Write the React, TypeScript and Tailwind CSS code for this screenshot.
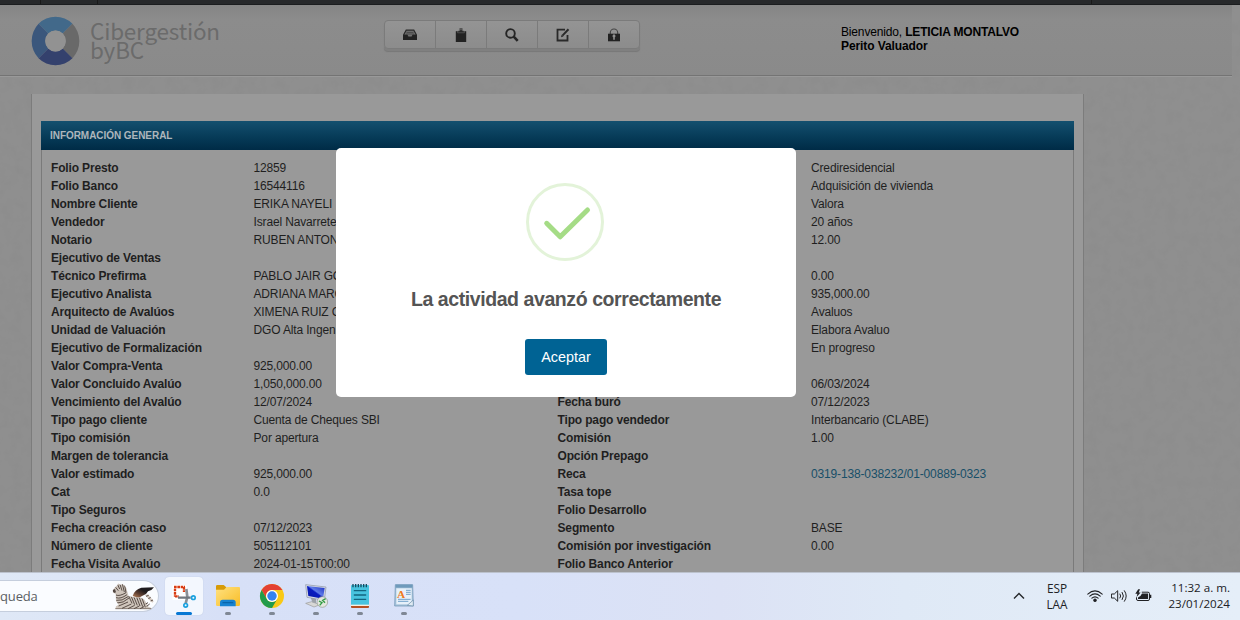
import type { ReactNode } from "react";

type Row = [string, string, string, string];

const rows: Row[] = [
  ["Folio Presto", "12859", "", "Crediresidencial"],
  ["Folio Banco", "16544116", "", "Adquisición de vivienda"],
  ["Nombre Cliente", "ERIKA NAYELI", "", "Valora"],
  ["Vendedor", "Israel Navarrete", "", "20 años"],
  ["Notario", "RUBEN ANTON", "", "12.00"],
  ["Ejecutivo de Ventas", "", "", ""],
  ["Técnico Prefirma", "PABLO JAIR GO", "", "0.00"],
  ["Ejecutivo Analista", "ADRIANA MARG", "", "935,000.00"],
  ["Arquitecto de Avalúos", "XIMENA RUIZ C", "", "Avaluos"],
  ["Unidad de Valuación", "DGO Alta Ingen", "", "Elabora Avaluo"],
  ["Ejecutivo de Formalización", "", "", "En progreso"],
  ["Valor Compra-Venta", "925,000.00", "", ""],
  ["Valor Concluido Avalúo", "1,050,000.00", "", "06/03/2024"],
  ["Vencimiento del Avalúo", "12/07/2024", "Fecha buró", "07/12/2023"],
  ["Tipo pago cliente", "Cuenta de Cheques SBI", "Tipo pago vendedor", "Interbancario (CLABE)"],
  ["Tipo comisión", "Por apertura", "Comisión", "1.00"],
  ["Margen de tolerancia", "", "Opción Prepago", ""],
  ["Valor estimado", "925,000.00", "Reca", "0319-138-038232/01-00889-0323"],
  ["Cat", "0.0", "Tasa tope", ""],
  ["Tipo Seguros", "", "Folio Desarrollo", ""],
  ["Fecha creación caso", "07/12/2023", "Segmento", "BASE"],
  ["Número de cliente", "505112101", "Comisión por investigación", "0.00"],
  ["Fecha Visita Avalúo", "2024-01-15T00:00", "Folio Banco Anterior", ""],
];

function Noise() {
  return (
    <svg className="absolute inset-0 h-full w-full" aria-hidden="true">
      <filter id="paper" x="0" y="0" width="100%" height="100%">
        <feTurbulence type="fractalNoise" baseFrequency="0.09" numOctaves={4} seed={4} />
        <feColorMatrix values="0 0 0 0 0.2  0 0 0 0 0.2  0 0 0 0 0.2  0.28 0 0 0 -0.11" />
      </filter>
      <rect width="100%" height="100%" filter="url(#paper)" />
    </svg>
  );
}

function Logo() {
  return (
    <div className="flex items-start">
      <svg className="h-[50px] w-[49px]" viewBox="-25 -25 50 50" preserveAspectRatio="none">
        <path d="M-17.3-17.3A24.8 24.8 0 0 1 17.3-17.3L7.4-7.4A10.5 10.5 0 0 0-7.4-7.4Z" fill="#42698a" />
        <path d="M17.3-17.3A24.8 24.8 0 0 1 17.3 17.3L7.4 7.4A10.5 10.5 0 0 0 7.4-7.4Z" fill="#696969" />
        <path d="M17.3 17.3A24.8 24.8 0 0 1-17.3 17.3L-7.4 7.4A10.5 10.5 0 0 0 7.4 7.4Z" fill="#34416d" />
        <path d="M-17.3 17.3A24.8 24.8 0 0 1-17.3-17.3L-7.4-7.4A10.5 10.5 0 0 0-7.4 7.4Z" fill="#3b577c" />
        <circle r="10.5" fill="#929292" />
      </svg>
      <div className="ml-[10px] mt-[5px] whitespace-nowrap font-['Noto_Sans_CJK_SC',sans-serif] text-[22.5px] leading-[19px] tracking-[-0.2px] text-[#6b6b6b]">
        Cibergestión
        <br />
        byBC
      </div>
    </div>
  );
}

const toolbarIcons: ReactNode[] = [
  <g key="inbox">
    <path d="M3.2 2.2H10.8L13.5 7H10L9 9H5L4 7H.5Z" fill="#707070" stroke="#292929" strokeWidth="1.2" />
    <path d="M0 7H4.2L5.2 9H8.8L9.8 7H14V12H0Z" fill="#222" />
    <path d="M3.5 4.4H10.5M3 6H11" stroke="#3a3a3a" strokeWidth=".7" />
  </g>,
  <g key="clip">
    <path d="M1.8 3.2H12.2V14H1.8Z" fill="#222" />
    <path d="M3.6 4.8V3.2L5.6 2.6V.3H8.4V2.6L10.4 3.2V4.8Z" fill="#292929" stroke="#777" strokeWidth=".5" />
    <circle cx="7" cy="1.7" r=".6" fill="#8a8a8a" />
  </g>,
  <g key="search" fill="none" stroke="#252525">
    <circle cx="5.5" cy="5.4" r="4.3" strokeWidth="1.9" />
    <path d="M8.7 8.7L12.7 12.9" strokeWidth="2.6" />
  </g>,
  <g key="edit" fill="none" stroke="#292929">
    <path d="M9 1.7H1.5V12.5H11.5V7" strokeWidth="1.8" />
    <path d="M12.5 1.2L6.4 7.6" strokeWidth="2" />
    <path d="M5 9.2L5.6 6.8L7.4 8.5Z" fill="#292929" stroke="none" />
  </g>,
  <g key="lock">
    <path d="M3.3 6V4.7A3.7 3.7 0 0 1 10.7 4.7V6" fill="none" stroke="#454545" strokeWidth="1.2" />
    <path d="M1 5.7H13V13.3H1Z" fill="#222" />
    <path d="M6.2 11.8V9.2A1.5 1.5 0 1 1 7.8 9.2V11.8Z" fill="#909090" />
  </g>,
];

function Toolbar() {
  return (
    <div className="flex h-[29px] w-[256px] rounded-[4px] border border-[#7b7b7b] bg-linear-to-b from-[#949494] to-[#8c8c8c] shadow-[0_2px_0_#808080,0_3px_1px_#777]">
      {toolbarIcons.map((icon, i) => (
        <div key={i} className="flex flex-1 items-center justify-center border-r border-[#7b7b7b] pr-px last:border-r-0">
          <svg className="h-[14px] w-[14px]" viewBox="0 0 14 14">{icon}</svg>
        </div>
      ))}
    </div>
  );
}

function Modal() {
  return (
    <div className="absolute left-[336px] top-[148px] flex h-[249px] w-[460px] flex-col items-center rounded-[5px] bg-white">
      <svg className="mt-[35px] mr-[2px] h-[78px] w-[78px]" viewBox="0 0 78 78" fill="none">
        <circle cx="39" cy="39" r="37.5" stroke="#e3f3d9" strokeWidth="3" />
        <path d="M20.7 40.3L34.2 53.8L61.5 27" stroke="#a5dc86" strokeWidth="5" strokeLinecap="round" strokeLinejoin="round" />
      </svg>
      <h2 className="mt-[26px] whitespace-nowrap text-[19.5px] font-bold leading-[25px] tracking-[-0.42px] text-[#545454]">La actividad avanzó correctamente</h2>
      <button className="mt-[27px] h-9 w-[82px] rounded-[3px] bg-[#006394] pt-px text-[14.4px] text-white">Aceptar</button>
    </div>
  );
}

function Zebra() {
  return (
    <svg className="h-[28px] w-[42px]" viewBox="18 18 126 84">
      <defs>
        <linearGradient id="wing" x1="0" y1="1" x2="1" y2="0"><stop stopColor="#c58a5f" /><stop offset=".35" stopColor="#5b3d30" /><stop offset=".6" stopColor="#1f1b1d" /></linearGradient>
        <clipPath id="body">
          <path d="M27 34L34 28L37 22L42 26L50 25Q61 30 63 44L68 60Q84 65 98 64Q112 65 118 76L127 92L136 96V99H28L30 91L38 86L30 76L29 54L20 49V43Z" />
        </clipPath>
      </defs>
      <path d="M80 60Q86 40 106 35L144 34L136 42L126 46L120 54L108 60L98 66Z" fill="url(#wing)" />
      <g clipPath="url(#body)">
        <path d="M18 18H140V102H18Z" fill="#cfc5bc" />
        <path d="M35 26L41 39M42 25L48 44M49 24L55 48M56 28L60 50M29 34L37 44M30 57Q40 62 60 50M30 65Q44 70 63 56M31 73Q48 76 66 62M33 81Q52 82 69 66M68 60L78 82M76 62L86 86M84 64L94 88M92 64L102 90M100 65L110 92M108 67L118 94M38 90L66 78M48 97L76 84M66 98L86 88M84 98L100 90M102 98L114 92" stroke="#51453f" strokeWidth="2.8" fill="none" />
        <path d="M18 43L27 39L30 49L24 51Z" fill="#514641" />
      </g>
      <path d="M117 72L125 66L140 80L136 83Z" fill="#fff" />
      <path d="M117 57L126 55L143 76L139 80L127 68Z" fill="#d4c9c0" />
      <path d="M120 61L128 58M127 68L134 64M134 75L141 72M119 84L126 80M122 91L131 84" stroke="#5a4d46" strokeWidth="3" />
      <path d="M28 98H136" stroke="#5e514a" strokeWidth="2" />
    </svg>
  );
}

function RunningDot({ x }: { x: number }) {
  return <rect x={x - 9} y="141" width="18" height="9" rx="4.5" fill="#7f8794" />;
}

const tileClass = "h-[38px] w-[38px] shrink-0";

function TaskApps() {
  return (
    <div className="mb-[2px] ml-[6px] flex gap-[6px]">
      <svg className={`${tileClass} rounded-[4px] bg-[#f3f7fe] shadow-[0_0_1px_#aebbd6]`} viewBox="495 36 114 114">
        <rect x="517" y="60" width="43" height="45" rx="3" fill="#fff" />
        <path d="M522 66H555M525 71V95M525 94H537M552 66V81" stroke="#d83b12" strokeWidth="7" strokeDasharray="8 2" fill="none" />
        <path d="M559 72L562 96L557 115" stroke="#8a9096" strokeWidth="8" fill="none" />
        <path d="M534 98H572" stroke="#70777e" strokeWidth="7" />
        <g fill="#e8f8ff" stroke="#1aa0df" strokeWidth="5">
          <circle cx="580" cy="98" r="5.5" />
          <circle cx="557" cy="121" r="5.5" />
        </g>
        <rect x="528" y="141" width="48" height="9" rx="4.5" fill="#0878d4" />
      </svg>
      <svg className={tileClass} viewBox="27 36 114 114">
        <defs>
          <linearGradient id="folder" x1="0" y1="0" x2="1" y2="1"><stop stopColor="#ffe180" /><stop offset="1" stopColor="#f8bd26" /></linearGradient>
        </defs>
        <path d="M48 64Q48 60 52 60H71L79 67V82H48Z" fill="#d79b08" />
        <path d="M48 74H72L80 66H117Q120 66 120 70V119Q120 123 116 123H52Q48 123 48 119Z" fill="url(#folder)" />
        <path d="M60 124V112Q60 104 68 104H99Q107 104 107 112V124Z" fill="#1682d1" />
        <path d="M69 113H98" stroke="#0865aa" strokeWidth="4" strokeLinecap="round" />
        <RunningDot x={84} />
      </svg>
      <svg className={tileClass} viewBox="159 36 114 114">
        <circle cx="216" cy="93" r="36" fill="#f9c916" />
        <path d="M184.8 75A36 36 0 0 1 247.2 75H216A18 18 0 0 0 200.4 102Z" fill="#e34033" />
        <path d="M184.8 75A36 36 0 0 0 216 129L231.6 102A18 18 0 0 1 200.4 102Z" fill="#229b4b" />
        <circle cx="216" cy="93" r="18" fill="#fff" />
        <circle cx="216" cy="93" r="14.2" fill="#3683ee" />
        <RunningDot x={216} />
      </svg>
      <svg className={tileClass} viewBox="291 36 114 114">
        <defs>
          <linearGradient id="screen" x1="0" y1="1" x2="1" y2="0"><stop stopColor="#0717a5" /><stop offset=".48" stopColor="#0a1cc0" /><stop offset=".55" stopColor="#5f7ce8" /><stop offset="1" stopColor="#182cc0" /></linearGradient>
        </defs>
        <path d="M317 115L335 110L360 119L342 126Z" fill="#d8d8d6" stroke="#999" strokeWidth="2" />
        <path d="M332 97L348 101V115L337 112Z" fill="#9da2a8" />
        <path d="M317 59L378 66L373 106L321 97Z" fill="#d8dde7" stroke="#8a91a0" strokeWidth="2" />
        <path d="M321 63L374 69L369 101L325 93Z" fill="url(#screen)" />
        <circle cx="367" cy="111" r="16" fill="#e3e7df" stroke="#92988e" strokeWidth="2" />
        <path d="M357 108L366 113L359 121M377 101L368 106L375 113" stroke="#319c42" strokeWidth="4" fill="none" />
        <RunningDot x={348} />
      </svg>
      <svg className={tileClass} viewBox="423 36 114 114">
        <rect x="453" y="60" width="54" height="68" rx="3" fill="#48c3df" />
        <path d="M453 119H507V123H453Z" fill="#f8f0df" />
        <path d="M453 123H507V126Q507 129 503 129H457Q453 129 453 126Z" fill="#b65022" />
        <path d="M459 57V67M467 57V67M475 57V67M483 57V67M491 57V67M499 57V67" stroke="#164b61" strokeWidth="4" />
        <path d="M463 77H497M463 90H497M463 103H497" stroke="#126580" strokeWidth="4" strokeLinecap="round" />
        <RunningDot x={480} />
      </svg>
      <svg className={tileClass} viewBox="555 36 114 114">
        <path d="M586 59H638L640 123H584Z" fill="#a7c4dc" stroke="#668eae" strokeWidth="2" />
        <path d="M587 59H637V68H587Z" fill="#6e9abb" />
        <path d="M589 70H635V118H589Z" fill="#e6f0f9" />
        <path d="M618 76H632M618 82H632M618 88H632M594 103H632M594 109H625" stroke="#71a2ca" strokeWidth="3" />
        <path d="M622 121L640 105V123Z" fill="#dfeaf3" stroke="#688da8" strokeWidth="2" />
        <text x="591" y="99" className="font-['Liberation_Serif',serif] text-[34px] font-bold" fill="#ee7920">A</text>
        <RunningDot x={612} />
      </svg>
    </div>
  );
}

function Taskbar() {
  return (
    <footer className="relative flex h-12 shrink-0 items-center border-t border-[#bcc2cd] bg-[linear-gradient(90deg,#dfe8f6_0%,#d7e0f7_18%,#d8e1f8_42%,#dce2f5_58%,#dfe9f6_73%,#e5eef8_100%)] font-['Open_Sans',sans-serif] text-[#202124]">
      <div className="mb-[2px] flex h-[32px] w-[159px] items-center justify-between rounded-r-full border border-l-0 border-[#c5cedd] bg-[#fafcff] pr-[4px]">
        <span className="pt-[2px] text-[13px] tracking-[-0.15px] text-[#5b5e63]">queda</span>
        <Zebra />
      </div>
      <TaskApps />
      <div className="mb-[2px] ml-auto flex items-center">
        <svg className="h-[8px] w-[12px]" viewBox="0 0 12 8" fill="none"><path d="M1 6.6L6 1.5L11 6.6" stroke="#25272b" strokeWidth="1.4" /></svg>
        <div className="ml-[16px] w-[32px] text-center text-[11.8px] leading-4">
          <div>ESP</div>
          <div>LAA</div>
        </div>
        <svg className="ml-[14px] h-[14px] w-[16px]" viewBox="0 0 16 14" fill="none" stroke="#202124" strokeWidth="1.1" strokeLinecap="round">
          <path d="M.8 5.1Q8-1.5 15.2 5.1M2.8 7.2Q8 2.6 13.2 7.2M4.9 9.2Q8 6.5 11.1 9.2" />
          <circle cx="8" cy="11.2" r="1.2" fill="#202124" />
        </svg>
        <svg className="ml-[8px] h-[14px] w-[17px]" viewBox="0 0 17 14" fill="none" stroke="#202124" strokeWidth="1" strokeLinecap="round" strokeLinejoin="round">
          <path d="M.8 5H3.3L6.7 1.7V12.3L3.3 9H.8ZM9 5Q10.5 7 9 9M11.2 3.4Q13.8 7 11.2 10.6M13.4 1.7Q17.2 7 13.4 12.3" />
        </svg>
        <svg className="ml-[7px] h-[14px] w-[17px]" viewBox="0 0 17 14">
          <path d="M6.8 3.2H13A1.5 1.5 0 0 1 14.5 4.7V10A1.5 1.5 0 0 1 13 11.5H3A1.5 1.5 0 0 1 1.5 10V8.3" fill="none" stroke="#202124" />
          <path d="M7 4.6H13.1V10.1H3V8.6L5.4 7Z" fill="#202124" />
          <path d="M15 5.8H16.3V8.9H15Z" fill="#202124" />
          <path d="M3.2.2L.3 4.7H2.4L1.6 8L5.6 3.4H3.7L5 .2Z" fill="#202124" />
        </svg>
        <div className="ml-[12px] mr-[10px] w-[66px] whitespace-nowrap text-right text-[11.6px] leading-4">
          <div>11:32 a. m.</div>
          <div>23/01/2024</div>
        </div>
      </div>
    </footer>
  );
}

export default function App() {
  return (
    <div className="relative flex h-[620px] w-[1240px] flex-col overflow-hidden bg-[#8f8f8f] font-['Liberation_Sans',Arial,sans-serif] text-xs text-[#1f1f1f]">
      <Noise />
      <div className="relative flex h-[5px] shrink-0 border-b border-[#1b1d1f] bg-[#27292b]">
        <div className="w-[41px] border-r border-[#191919]" />
        <div className="w-[57px] border-r border-[#191919]" />
        <div className="w-[994px] border-r border-[#191919]" />
      </div>
      <header className="relative flex h-[72px] w-[1232px] shrink-0 items-start border-b border-[#999] bg-linear-to-b from-[#858585] via-[#8c8c8c] via-20% to-[#8a8a8a] shadow-[inset_0_-1px_0_#747474]">
        <div className="ml-[31px] mt-[11px] w-[354px]"><Logo /></div>
        <div className="-ml-px mt-[15px]"><Toolbar /></div>
        <div className="ml-[201px] mt-5 leading-[14px] tracking-[-0.16px] text-black">
          <div>Bienvenido, <b>LETICIA MONTALVO</b></div>
          <b className="tracking-[-0.1px]">Perito Valuador</b>
        </div>
      </header>
      <main className="relative ml-[31px] mt-[17px] min-h-0 w-[1053px] flex-1 overflow-hidden border-x border-[#7c7c7c] bg-[#999] px-[9px] pt-[27px]">
        <div className="h-[29px] bg-linear-to-b from-[#14506f] to-[#002b46] pl-[9px] text-[10px] font-bold leading-[29px] tracking-[-0.05px] text-[#adb6bc]">INFORMACIÓN GENERAL</div>
        <div className="border-x border-[#7a7a7a] pb-4 pl-[9px] pt-[9px] tracking-[-0.15px]">
          {rows.map(([label, value, label2, value2]) => (
            <div key={label} className="grid h-[18px] grid-cols-[202.5px_304px_253.5px_1fr] whitespace-nowrap leading-[18px]">
              <b>{label}</b>
              <span>{value}</span>
              <b>{label2}</b>
              <span className={label2 === "Reca" ? "text-[#174f68]" : ""}>{value2}</span>
            </div>
          ))}
        </div>
      </main>
      <Taskbar />
      <Modal />
    </div>
  );
}
